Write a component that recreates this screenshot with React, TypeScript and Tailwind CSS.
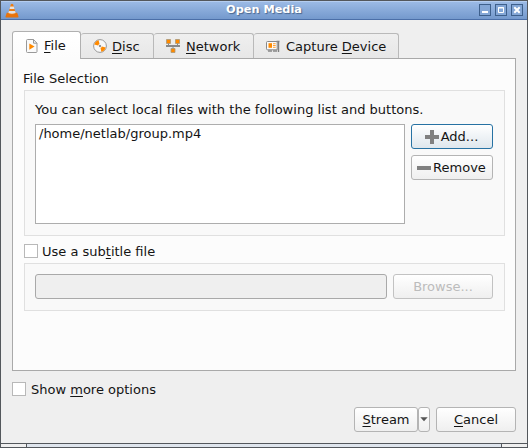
import React from 'react';

const btnBase =
  'flex items-center justify-center rounded-[3px] border bg-gradient-to-b from-white h-[25px] leading-[15px]';
const btn = btnBase + ' border-[#b4b4b4] to-[#efefef]';

function Cone() {
  return (
    <svg width="14" height="15" viewBox="0 0 14 16" preserveAspectRatio="none" className="block">
      <path d="M1.8 10.5h10.4l1.3 4a.8.8 0 0 1-.7 1H1.2a.8.8 0 0 1-.7-1z" fill="#e8730c" />
      <path d="M5.9 1.2Q7 .4 8.1 1.2L10.8 11.2Q7 13.6 3.2 11.2z" fill="#ee7d12" />
      <path d="M5.2 3.8h3.6l.7 2.6h-5z" fill="#e4e4e4" />
      <path d="M3.9 8.4h6.2l.6 2.3Q7 12.3 3.3 10.7z" fill="#e4e4e4" />
    </svg>
  );
}

function FileIcon() {
  return (
    <svg width="12" height="14" viewBox="0 0 12 14" className="block">
      <path d="M1.5.5h6l3.5 3.7v8.3a1 1 0 0 1-1 1H1.5a1 1 0 0 1-1-1v-11a1 1 0 0 1 1-1z" fill="#fafafa" stroke="#999" />
      <path d="M7.5.5v3.7H11" fill="none" stroke="#999" />
      <path d="M3.3 4.4 8.6 7.6l-5.3 3.2z" fill="#ff8a00" />
    </svg>
  );
}

function DiscIcon() {
  return (
    <svg width="14" height="14" viewBox="0 0 14 14" className="block">
      <circle cx="7" cy="7" r="6.4" fill="#f8f8f8" stroke="#999" strokeWidth="1" />
      <path d="M7 7 1.3 5.6A6 6 0 0 1 5.6 1.3z" fill="#ff8a00" />
      <path d="M7 7 12.7 8.4A6 6 0 0 1 8.4 12.7z" fill="#ff8a00" />
      <circle cx="7" cy="7" r="1.9" fill="#f3f3f3" />
      <circle cx="7" cy="7" r="1" fill="#777" />
    </svg>
  );
}

function NetworkIcon() {
  return (
    <svg width="14" height="14" viewBox="0 0 14 14" className="block">
      <path d="M0 6h14v2H0zM2 4h1v3H2zM11 4h1v3h-1zM6.5 7h1v3h-1z" fill="#888" />
      <path d="M.5.5h4v4h-4zM9.5.5h4v4h-4zM5 9.5h4v4H5z" fill="#ff8a00" stroke="#a89878" strokeWidth=".8" />
    </svg>
  );
}

function CaptureIcon() {
  return (
    <svg width="14" height="13" viewBox="0 0 14 13" className="block">
      <path d="M10.5 1.5h3M12.5 1v11" fill="none" stroke="#808080" strokeWidth="1.4" />
      <path d="M1.5 1.5h9.7v8.3H1.5a1 1 0 0 1-1-1V2.5a1 1 0 0 1 1-1z" fill="#fafafa" stroke="#888" />
      <path d="M2.5 3.2H6v4.6H2.5z" fill="#ff8a00" />
      <path d="M7 3.7h2.7M7 5.5h2.7M7 7.3h2.7" stroke="#ffa033" />
      <path d="M2 11h9" stroke="#888" strokeWidth="1.6" strokeDasharray="4 1" />
    </svg>
  );
}

function Key({ children }: { children: string }) {
  return <span className="underline decoration-1 underline-offset-2">{children}</span>;
}

function Tab({ icon, className, children }: { icon: React.ReactNode; className: string; children: React.ReactNode }) {
  return (
    <div className={'mt-[2px] flex h-[25px] items-center rounded-t-[3px] border border-l-0 border-b-0 border-[#b9b9b9] bg-gradient-to-b from-[#efefef] to-[#e7e7e7] pl-[12px] ' + className}>
      {icon}
      <span className="leading-[15px]">{children}</span>
    </div>
  );
}

function WinButton({ children }: { children: React.ReactNode }) {
  return (
    <div className="size-[12px] border border-[#3e608c] bg-[#83a6d6]">
      <svg width="10" height="10" viewBox="0 0 10 10" className="block" fill="none" stroke="white">
        {children}
      </svg>
    </div>
  );
}

export default function App() {
  return (
    <div className="flex h-[448px] w-[528px] flex-col overflow-hidden border border-[#53575c] bg-[#efefef] font-['DejaVu_Sans',sans-serif] text-[13px] whitespace-nowrap text-[#141414]">
      <header className="flex h-[19px] shrink-0 items-start border-t border-b border-t-[#b4cdf0] border-b-[#4b6fa8] bg-gradient-to-b from-[#9bbae5] to-[#7499cd]">
        <div className="w-[60px] pt-px pl-[4px]"><Cone /></div>
        <div className="flex-1 text-center text-[11.3px] leading-[15px] font-bold text-white [text-shadow:1px_1px_1px_#49678f]">Open Media</div>
        <div className="flex w-[60px] justify-end gap-[4px] pt-[2px] pr-[4px]">
          <WinButton><path d="M2 7h6" strokeWidth="2" /></WinButton>
          <WinButton><path d="M2.5 2.5h5v5h-5zM2 3h6" /></WinButton>
          <WinButton><path d="m2.3 2.3 5.4 5.4M7.7 2.3 2.3 7.7" strokeWidth="2" /></WinButton>
        </div>
      </header>

      <main className="flex h-[423px] shrink-0 flex-col px-[11px] pt-[11px]">
        <nav className="flex h-[27px] shrink-0">
          <div className="z-10 flex h-[28px] w-[69px] items-center rounded-t-[3px] border border-b-0 border-[#b0b0b0] bg-gradient-to-b from-white to-[#fcfcfc] pl-[13px]">
            <FileIcon />
            <span className="ml-[6px] leading-[15px]"><Key>F</Key>ile</span>
          </div>
          <Tab icon={<DiscIcon />} className="w-[73px] gap-[5px]"><Key>D</Key>isc</Tab>
          <Tab icon={<NetworkIcon />} className="w-[100px] gap-[6px]"><Key>N</Key>etwork</Tab>
          <Tab icon={<CaptureIcon />} className="w-[145px] gap-[6px]">Capture <Key>D</Key>evice</Tab>
        </nav>

        <section className="h-[313px] w-[504px] shrink-0 border border-[#a9a9a9] bg-[#fcfcfc] px-[11px] pt-[12px]">
          <div className="-ml-px h-[19px] leading-[15px]">File Selection</div>
          <div className="h-[146px] w-[481px] border border-[#e0e0e0] bg-[#f9f9f9] px-[10px] pt-[11px]">
            <div className="h-[22px] leading-[15px] tracking-[0.02px]">You can select local files with the following list and buttons.</div>
            <div className="flex gap-[6px]">
              <div className="h-[100px] w-[370px] border border-[#adadad] bg-white pt-px pl-[3px] leading-[15px]">/home/netlab/group.mp4</div>
              <div className="flex w-[82px] shrink-0 flex-col gap-[6px]">
                <button className={btnBase + ' border-[#2772a3] to-[#dfe7ed]'}>
                  <svg width="14" height="14" viewBox="0 0 14 14" className="-ml-px mr-[2px]"><path d="M5 0h4v5h5v4H9v5H5V9H0V5h5z" fill="#808080" /></svg>
                  Add...
                </button>
                <button className={btn}>
                  <svg width="14" height="14" viewBox="0 0 14 14" className="-ml-px mr-[2px]"><path d="M0 5h14v4H0z" fill="#808080" /></svg>
                  Remove
                </button>
              </div>
            </div>
          </div>
          <div className="mt-[8px] flex h-[14px] items-center">
            <span className="size-[14px] border border-[#b8b8b8] bg-white" />
            <span className="ml-[4px] leading-[15px]">Use a sub<Key>t</Key>itle file</span>
          </div>
          <div className="mt-[5px] flex h-[48px] w-[481px] gap-[6px] border border-[#e0e0e0] bg-[#f9f9f9] px-[10px] pt-[10px]">
            <div className="h-[25px] w-[352px] rounded-[3px] border border-[#a9a9a9] bg-[#efefef]" />
            <button className={btnBase + ' w-[100px] border-[#c2c2c2] to-[#efefef] text-[#bcbcbc]'}>Browse...</button>
          </div>
        </section>

        <div className="mt-[11px] flex h-[14px] items-center">
          <span className="size-[14px] border border-[#b8b8b8] bg-white" />
          <span className="ml-[5px] leading-[15px]">Show <Key>m</Key>ore options</span>
        </div>
        <div className="mt-[11px] flex justify-end">
          <button className={btn + ' w-[64px]'}><span><Key>S</Key>tream</span></button>
          <button className={btn + ' w-[12px]'}>
            <svg width="8" height="5" viewBox="0 0 8 5" className="shrink-0"><path d="M.3.3h7.4L4 4.3z" fill="#555" /></svg>
          </button>
          <button className={btn + ' ml-[6px] w-[80px]'}><span><Key>C</Key>ancel</span></button>
        </div>
      </main>

      <footer className="flex h-[4px] shrink-0 border-t border-[#53575c]">
        <div className="w-[26px] border-r border-[#53575c] bg-[#efefef]" />
        <div className="flex-1 bg-[#dfe5ed]" />
        <div className="w-[26px] border-l border-[#53575c] bg-[#efefef]" />
      </footer>
    </div>
  );
}
